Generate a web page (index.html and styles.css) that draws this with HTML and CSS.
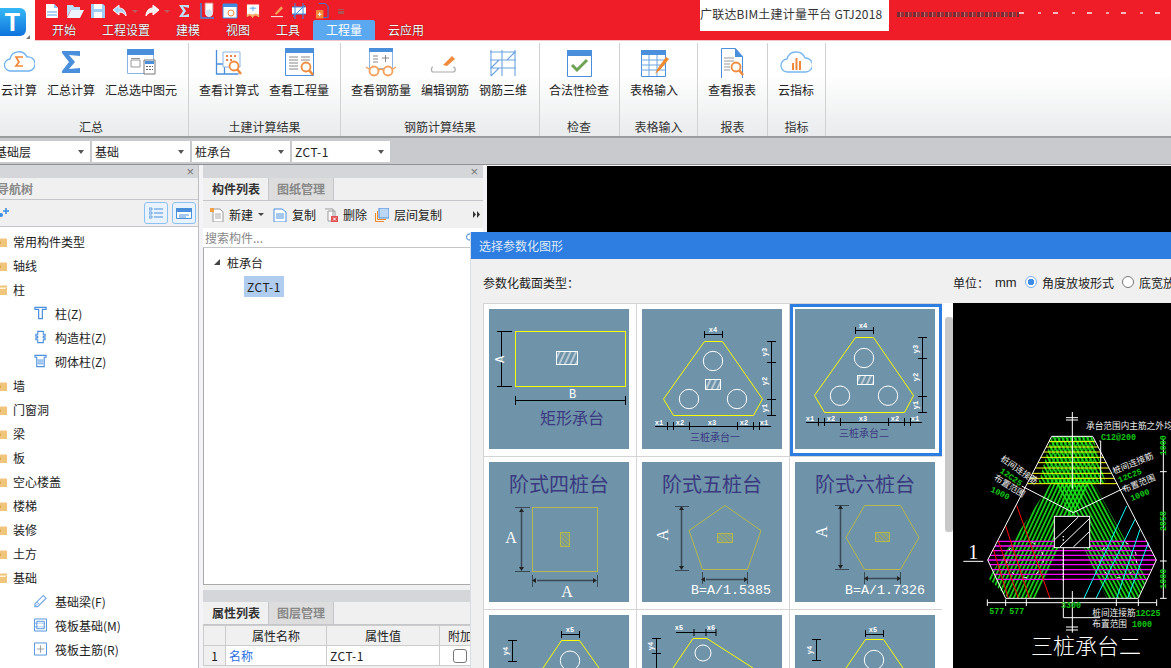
FILE: index.html
```html
<!DOCTYPE html>
<html lang="zh-CN">
<head>
  <meta charset="UTF-8">
  <title>广联达BIM土建计量平台 GTJ2018</title>
  <link rel="stylesheet" href="styles.css">
</head>
<body>
  <!-- shared icon shapes and hatch fills -->
  <svg class="defs" width="0" height="0">
    <defs>
      <symbol id="folder" viewBox="0 0 14 12">
        <path d="M0 2h5l1 1.500h8V12H0z" fill="#efc67c"/>
        <path d="M5 6.500h3v2.500H5z" fill="#dda550"/>
      </symbol>
      <symbol id="folder-open" viewBox="0 0 14 12">
        <path d="M0 1h5l1 1.500h8V12H0z" fill="#efc67c"/>
        <path d="M2 4.500h12L12 6H4z" fill="#fff3d8"/>
      </symbol>
      <pattern id="hatch-w" width="5" height="5" patternUnits="userSpaceOnUse" patternTransform="rotate(25)">
        <path d="M2 0v5" stroke="#fff" stroke-width="1"/>
      </pattern>
      <pattern id="hatch-y" width="3" height="3" patternUnits="userSpaceOnUse" patternTransform="rotate(-45)">
        <path d="M1 0v3" stroke="#b5b84c" stroke-width="1"/>
      </pattern>
      <pattern id="green-l" width="11" height="11" patternUnits="userSpaceOnUse" patternTransform="rotate(25)">
        <path d="M5 0v11" stroke="#19e619" stroke-width="5"/>
      </pattern>
      <pattern id="green-r" width="11" height="11" patternUnits="userSpaceOnUse" patternTransform="rotate(-28)">
        <path d="M5 0v11" stroke="#19e619" stroke-width="5"/>
      </pattern>
    </defs>
  </svg>

  <header class="titlebar">
    <div class="logo-box">
      <div class="logo">T</div>
      <span class="logo-mark"></span>
    </div>
    <div class="title-left">
      <div class="quick">
        <svg class="q" width="16" height="16" viewBox="0 0 16 16"><path d="M2 1h8l4 4v10H2z" fill="#fff"/><path d="M10 1v4h4" fill="#8fc2f2"/><path d="M3 9h10M3 12h10" stroke="#5aa0e6"/></svg>
        <svg class="q" width="18" height="16" viewBox="0 0 18 16"><path d="M1 2h6l1 2h6v3H5L1 14z" fill="#bcdcf8"/><path d="M5 7h13l-4 8H1z" fill="#eef6fd"/></svg>
        <svg class="q" width="16" height="16" viewBox="0 0 16 16"><path d="M1 1h12l2 2v12H1z" fill="#9fcdf6"/><path d="M4 1h8v5H4z" fill="#fff"/><path d="M4 9h8v6H4z" fill="#fff"/></svg>
        <svg class="q" width="16" height="14" viewBox="0 0 16 14"><path d="M7 1L1 6l6 5V8c3 0 5 1 7 4 0-5-3-8-7-8z" fill="#a9d4f8" stroke="#fff"/></svg>
        <span class="q-arrow"></span>
        <svg class="q" width="16" height="14" viewBox="0 0 16 14"><path d="M9 1l6 5-6 5V8C6 8 4 9 2 12c0-5 3-8 7-8z" fill="#f2f2f2" stroke="#fff"/></svg>
        <span class="q-arrow"></span>
        <svg class="q q-sigma" width="12" height="14" viewBox="0 0 12 14"><path d="M1 1h10v3L5 2.500 8 7l-3 4.500 6-1.500v3H1l4-6z" fill="#bfe0fb"/></svg>
        <svg class="q q-wide" width="16" height="18" viewBox="0 0 16 18"><path d="M1 1v15h13" fill="none" stroke="#3d8ce0" stroke-width="1.500"/><path d="M5 1h8v9H5z" fill="#fff" stroke="#d77"/><circle cx="9" cy="11" r="3.500" fill="#cfe5fa" stroke="#eee"/></svg>
        <svg class="q" width="16" height="16" viewBox="0 0 16 16"><path d="M1 1h14v14H1z" fill="#fff" stroke="#3d8ce0"/><path d="M1 1h14v3H1z" fill="#3d8ce0"/><circle cx="9" cy="10" r="3" fill="none" stroke="#f08a3c"/></svg>
        <svg class="q q-m2" width="14" height="16" viewBox="0 0 15 16"><path d="M1 1h13v11H1z" fill="#fff"/><path d="M4 5h7M7.500 3v5" stroke="#5aa0e6"/><path d="M1 14c2-3 4-3 6 0 2-3 4-3 7 0" fill="none" stroke="#f6b26b" stroke-width="2"/></svg>
        <svg class="q q-wide" width="14" height="15" viewBox="0 0 15 15"><path d="M5 10l7-8 2 2-7 7z" fill="#f5a05a"/><path d="M1 13h13" stroke="#fff"/></svg>
        <svg class="q q-m1" width="16" height="16" viewBox="0 0 16 16"><path d="M1 4h14v7H1z" fill="#fff"/><path d="M1 4h14M1 11h14M4 0v16M12 0v16M2 14L14 2" stroke="#3d8ce0" fill="none"/></svg>
        <svg class="q q-m2" width="14" height="18" viewBox="0 0 15 18"><path d="M4 1h7l3 3v12H6" fill="none" stroke="#2c7fd6"/><path d="M1 8h8v9H1z" fill="#f08a3c"/><path d="M3 12.500h4M5 10.500v4" stroke="#fff"/></svg>
        <span class="q-more"></span>
      </div>
      <nav class="tabs">
        <span class="tab">开始</span>
        <span class="tab">工程设置</span>
        <span class="tab">建模</span>
        <span class="tab">视图</span>
        <span class="tab">工具</span>
        <span class="tab tab-active">工程量</span>
        <span class="tab">云应用</span>
      </nav>
    </div>
    <div class="app-title">广联达BIM土建计量平台 GTJ2018</div>
    <div class="garble"></div>
  </header>

  <section class="ribbon">
    <div class="group g1">
      <div class="btns">
        <div class="rbtn">
          <svg width="32" height="32" viewBox="0 0 32 32"><path d="M8 25a6 6 0 0 1-1-12 9 9 0 0 1 17-2 7 7 0 0 1 2 14z" fill="#fff" stroke="#6db1ee" stroke-width="1.300"/><path d="M20 11h-7l3 5-3 4h7" fill="none" stroke="#f0883a" stroke-width="1.700"/></svg>
          <span>云计算</span>
        </div>
        <div class="rbtn">
          <svg width="32" height="32" viewBox="0 0 32 32"><path d="M7 5h18v5l-11-1 6 7-6 7 11-1v5H7v-2l7-9-7-9z" fill="#4a8fdc"/></svg>
          <span>汇总计算</span>
        </div>
        <div class="rbtn">
          <svg width="32" height="32" viewBox="0 0 32 32"><path d="M2.500 3.500h26v24h-26z" fill="#fff" stroke="#8bb5e4"/><path d="M2 3h27v6H2z" fill="#4a8fdc"/><path d="M6 14h9v7H6zM6 12.500h9" fill="none" stroke="#999"/><path d="M19 14h11v14H19z" fill="#fff" stroke="#777"/><path d="M20 15h9v3h-9z" fill="#4a8fdc"/><path d="M21 20h2v1h-2zM24 20h2v1h-2zM27 20h1v1h-1zM21 23h2v1h-2zM24 23h2v1h-2zM27 23h1v1h-1z" fill="#666"/></svg>
          <span>汇总选中图元</span>
        </div>
      </div>
      <div class="gname gname-1">汇总</div>
    </div>

    <div class="group g2">
      <div class="btns">
        <div class="rbtn">
          <svg width="32" height="32" viewBox="0 0 32 32"><path d="M3.500 4v24h22" fill="none" stroke="#4a8fdc" stroke-width="1.300"/><path d="M3.500 18h8v10" fill="none" stroke="#4a8fdc" stroke-width="1.300"/><path d="M10 6h17v15H10z" fill="#fff" stroke="#8bb5e4"/><path d="M13 9h2v2h-2zM17 9h2v2h-2zM21 9h2v2h-2zM13 13h2v2h-2zM17 13h2v2h-2z" fill="#e6824a"/><circle cx="21" cy="20" r="4.500" fill="#fff" stroke="#f08a3c" stroke-width="1.800"/><path d="M24 23l4 5" stroke="#f08a3c" stroke-width="2.500"/></svg>
          <span>查看计算式</span>
        </div>
        <div class="rbtn">
          <svg width="32" height="32" viewBox="0 0 32 32"><path d="M2.500 3.500h28v26h-28z" fill="#fff" stroke="#4a8fdc"/><path d="M2 2h29v5H2z" fill="#4a8fdc"/><path d="M6 11h9M6 14h9M6 17h9M6 20h9M6 23h9M18 11h9M18 14h9" stroke="#888"/><circle cx="23" cy="21" r="4.500" fill="#fff" stroke="#f08a3c" stroke-width="1.800"/><path d="M26 24l4 5" stroke="#f08a3c" stroke-width="2.500"/></svg>
          <span>查看工程量</span>
        </div>
      </div>
      <div class="gname">土建计算结果</div>
    </div>

    <div class="group g3">
      <div class="btns">
        <div class="rbtn">
          <svg width="32" height="32" viewBox="0 0 32 32"><path d="M4.500 4.500h23v18h-23z" fill="#fff" stroke="#8bb5e4"/><path d="M4 2h24v4H4z" fill="#4a8fdc"/><path d="M8 10h5M8 13h5M8 16h5M17 12h7M20.500 9v7" stroke="#888"/><circle cx="9" cy="25" r="4.500" fill="#fff" stroke="#f5a05a" stroke-width="1.800"/><circle cx="23" cy="25" r="4.500" fill="#fff" stroke="#f5a05a" stroke-width="1.800"/><path d="M13 24c2-1 4-1 6 0M4 23L1 21M28 23l3-2" fill="none" stroke="#f5a05a" stroke-width="1.500"/></svg>
          <span>查看钢筋量</span>
        </div>
        <div class="rbtn">
          <svg width="32" height="32" viewBox="0 0 32 32"><path d="M14 19l9-9 3 3-8 7z" fill="#f08a3c"/><path d="M4 21c-2 0-2 5 0 5h20c3 0 3-5 0-5" fill="none" stroke="#aaa" stroke-width="1.200"/></svg>
          <span>编辑钢筋</span>
        </div>
        <div class="rbtn">
          <svg width="32" height="32" viewBox="0 0 32 32"><path d="M4 4v26M28 4v26M15 4v26M3 6h26M3 14h26M3 22h26M4 22l8-8M4 30l8-8M20 14l8-8" fill="none" stroke="#6ba4e2" stroke-width="1.100"/></svg>
          <span>钢筋三维</span>
        </div>
      </div>
      <div class="gname">钢筋计算结果</div>
    </div>

    <div class="group g4">
      <div class="btns">
        <div class="rbtn">
          <svg width="32" height="32" viewBox="0 0 32 32"><path d="M4.500 5.500h24v25h-24z" fill="#fff" stroke="#4a8fdc"/><path d="M4 4h25v6H4z" fill="#4a8fdc"/><path d="M9 19l5 5 10-10" fill="none" stroke="#6da354" stroke-width="3"/></svg>
          <span>合法性检查</span>
        </div>
      </div>
      <div class="gname">检查</div>
    </div>

    <div class="group g5">
      <div class="btns">
        <div class="rbtn">
          <svg width="32" height="32" viewBox="0 0 32 32"><path d="M3.500 5.500h24v25h-24z" fill="#fff" stroke="#4a8fdc"/><path d="M3 4h25v5H3z" fill="#4a8fdc"/><path d="M3 14h25M3 19h25M3 24h25M11 9v21M19 9v21" stroke="#6ba4e2"/><path d="M17 28l3-6 8-11 3 2-9 11z" fill="#f08a2c"/></svg>
          <span>表格输入</span>
        </div>
      </div>
      <div class="gname">表格输入</div>
    </div>

    <div class="group g6">
      <div class="btns">
        <div class="rbtn">
          <svg width="32" height="32" viewBox="0 0 32 32"><path d="M5.500 2.500h14l7 8v22h-21z" fill="#fff" stroke="#4a8fdc"/><path d="M19 2l8 9h-8z" fill="#4a8fdc"/><path d="M8 12h10M8 15h10M8 18h6M8 21h6M8 24h6" stroke="#999"/><circle cx="20" cy="21" r="4.500" fill="#fff" stroke="#f08a3c" stroke-width="1.800"/><path d="M23 24l4 5" stroke="#f08a3c" stroke-width="2.500"/></svg>
          <span>查看报表</span>
        </div>
      </div>
      <div class="gname">报表</div>
    </div>

    <div class="group g7">
      <div class="btns">
        <div class="rbtn">
          <svg width="32" height="32" viewBox="0 0 32 32"><path d="M8 26a6.500 6.500 0 0 1-1-13 9.500 9.500 0 0 1 18-1 7 7 0 0 1 1 14z" fill="#fff" stroke="#78b7ee" stroke-width="1.300"/><path d="M12 17h2v7h-2zM15.500 12h2v12h-2zM19 15h2v9h-2z" fill="#f0883a"/></svg>
          <span>云指标</span>
        </div>
      </div>
      <div class="gname">指标</div>
    </div>
  </section>

  <section class="combos">
    <div class="combo combo-first"><span class="clip-text">基础层</span></div>
    <div class="combo">基础</div>
    <div class="combo">桩承台</div>
    <div class="combo latin">ZCT-1</div>
  </section>

  <main class="workspace">
    <aside class="nav-panel">
      <div class="strip"><span class="x">×</span></div>
      <div class="nav-title"><span>导航树</span></div>
      <div class="nav-tools">
        <svg class="spark" width="9" height="10" viewBox="0 0 9 10"><path d="M6 0v6M3 3h6" stroke="#3d8ce0" stroke-width="1.600"/><circle cx="1" cy="7" r="2" fill="#3d8ce0"/></svg>
        <div class="tool-btn">
          <svg width="14" height="14" viewBox="0 0 14 14"><path d="M0 2h3v2H0zM0 6h3v2H0zM0 10h3v2H0z" fill="none" stroke="#4a8fdc" stroke-width=".8"/><path d="M5 3h9M5 7h9M5 11h9" stroke="#4a8fdc"/></svg>
        </div>
        <div class="tool-btn">
          <svg width="16" height="14" viewBox="0 0 16 14"><path d="M.5 2.500h15v10H.5z" fill="#fff" stroke="#4a8fdc"/><path d="M0 2h16v4H0z" fill="#4a8fdc"/><path d="M3 9h10M3 11h7" stroke="#4a8fdc"/></svg>
        </div>
      </div>
      <ul class="tree">
        <li class="node"><svg class="folder"><use href="#folder"/></svg>常用构件类型</li>
        <li class="node"><svg class="folder"><use href="#folder"/></svg>轴线</li>
        <li class="node"><svg class="folder"><use href="#folder-open"/></svg>柱</li>
        <li class="leaf"><svg class="leaf-ico" viewBox="0 0 14 14"><path d="M1 1h12v2H9v10H5V3H1z" fill="#fff" stroke="#4a8fdc" stroke-width="1.300"/></svg>柱(Z)</li>
        <li class="leaf"><svg class="leaf-ico" viewBox="0 0 14 14"><path d="M4 1h6v3h2v2h-2v2h2v2h-2v3H4v-3H2V8h2V6H2V4h2z" fill="#fff" stroke="#4a8fdc" stroke-width="1.200"/></svg>构造柱(Z)</li>
        <li class="leaf"><svg class="leaf-ico" viewBox="0 0 14 14"><path d="M1 1h12v2h-2v10H3V3H1z" fill="#fff" stroke="#4a8fdc" stroke-width="1.200"/><path d="M4 6h6M4 8h6M4 10h6" stroke="#4a8fdc"/></svg>砌体柱(Z)</li>
        <li class="node"><svg class="folder"><use href="#folder"/></svg>墙</li>
        <li class="node"><svg class="folder"><use href="#folder"/></svg>门窗洞</li>
        <li class="node"><svg class="folder"><use href="#folder"/></svg>梁</li>
        <li class="node"><svg class="folder"><use href="#folder"/></svg>板</li>
        <li class="node"><svg class="folder"><use href="#folder"/></svg>空心楼盖</li>
        <li class="node"><svg class="folder"><use href="#folder"/></svg>楼梯</li>
        <li class="node"><svg class="folder"><use href="#folder"/></svg>装修</li>
        <li class="node"><svg class="folder"><use href="#folder"/></svg>土方</li>
        <li class="node"><svg class="folder"><use href="#folder-open"/></svg>基础</li>
        <li class="leaf"><svg class="leaf-ico" viewBox="0 0 14 14"><path d="M1 10l9-9 3 3-9 9H1z" fill="#fff" stroke="#6ba4e2" stroke-width="1.200"/><path d="M3 8l3 3M1 13l3-3" stroke="#6ba4e2"/></svg>基础梁(F)</li>
        <li class="leaf"><svg class="leaf-ico" viewBox="0 0 14 14"><path d="M.5.500h13v13H.5z" fill="#fff" stroke="#4a8fdc"/><path d="M3 3h8v8H3z" fill="none" stroke="#4a8fdc"/><path d="M1 5h12M1 9h12" stroke="#4a8fdc" stroke-dasharray="1 1"/></svg>筏板基础(M)</li>
        <li class="leaf"><svg class="leaf-ico" viewBox="0 0 14 14"><path d="M.5.500h13v13H.5z" fill="#fff" stroke="#4a8fdc"/><path d="M3 7h8M7 3v8" stroke="#999"/></svg>筏板主筋(R)</li>
      </ul>
    </aside>

    <section class="mid-panel">
      <div class="strip"><span class="x x-mid">×</span></div>
      <div class="ptabs">
        <span class="ptab ptab-on">构件列表</span>
        <span class="ptab">图纸管理</span>
      </div>
      <div class="mid-tools">
        <svg class="tool-ico" viewBox="0 0 14 14"><path d="M3 1h7l3 3v10H3z" fill="#fff" stroke="#999"/><path d="M5 6h6M5 8h6M5 10h6" stroke="#aaa"/><path d="M0 0h4v4H0z" fill="#f0a040"/></svg>
        <span>新建</span>
        <span class="caret"></span>
        <svg class="tool-ico" viewBox="0 0 14 14"><path d="M1 1h8l4 3v10H1z" fill="#fff" stroke="#4a8fdc"/><path d="M3 6h8M3 8h8M3 10h8" stroke="#4a8fdc"/></svg>
        <span>复制</span>
        <svg class="tool-ico ti-gap" viewBox="0 0 14 14"><path d="M1 1h8v8M4 3h7v6M4 3v10h4" fill="#fff" stroke="#999"/><path d="M7 8h7v6H7z" fill="#e05050"/><path d="M9 9.500l3 3M12 9.500l-3 3" stroke="#fff"/></svg>
        <span>删除</span>
        <svg class="tool-ico ti-gap" viewBox="0 0 14 14"><path d="M4 0h10v10H4z" fill="#bcd6f5" stroke="#4a8fdc"/><path d="M2.500 3v8.500H11M.5 5v8.500H9" fill="none" stroke="#f08a2c"/></svg>
        <span>层间复制</span>
        <span class="more">
          <svg width="7" height="7" viewBox="0 0 7 7"><path d="M0 0l3 3.500L0 7zM4 0l3 3.500L4 7z" fill="#333"/></svg>
        </span>
      </div>
      <div class="search">
        <span class="search-text">搜索构件...</span>
        <svg width="9" height="9" viewBox="0 0 9 9"><circle cx="4.500" cy="4" r="3" fill="none" stroke="#6ba4e2" stroke-width="1.300"/></svg>
      </div>
      <div class="comp-tree">
        <div class="comp-row"><span class="tri"></span>桩承台</div>
        <div class="comp-row comp-child"><span class="sel latin">ZCT-1</span></div>
      </div>
      <div class="strip strip-lower"></div>
      <div class="ptabs ptabs-lower">
        <span class="ptab ptab-on">属性列表</span>
        <span class="ptab">图层管理</span>
      </div>
      <table class="props">
        <tr>
          <th class="c-no"></th>
          <th class="c-name">属性名称</th>
          <th class="c-val">属性值</th>
          <th class="c-add">附加</th>
        </tr>
        <tr>
          <th class="c-no">1</th>
          <td class="link">名称</td>
          <td class="latin">ZCT-1</td>
          <td class="c-check"><span class="check"></span></td>
        </tr>
      </table>
    </section>

    <div class="canvas"></div>

    <!-- dialog floats over the drawing area -->
    <div class="dialog">
      <div class="dlg-head">选择参数化图形</div>
      <div class="dlg-row">
        <span class="dlg-label">参数化截面类型：</span>
        <span class="unit">单位：</span>
        <span class="unit-mm">mm</span>
        <span class="radio radio-on"></span>
        <span class="radio-text">角度放坡形式</span>
        <span class="radio"></span>
        <span class="radio-text">底宽放坡形式</span>
      </div>
      <div class="dlg-body">
        <div class="shape-grid">
          <div class="cell">
            <svg class="shape" viewBox="0 0 140 140">
              <rect x="26.500" y="22.500" width="110" height="55" class="yl"/>
              <path d="M12.500 22v55M8 22.500h15M8 77.500h15M26.500 87v9M136.500 87v9M26.500 91.500h110" class="dim"/>
              <rect x="67.500" y="42.500" width="21" height="13" class="hw"/>
              <text x="7" y="54" class="t-m" transform="rotate(-90 11 50)">A</text>
              <text x="80" y="89" class="t-m">B</text>
              <text x="83" y="115" class="t-name t-16">矩形承台</text>
            </svg>
          </div>
          <div class="cell">
            <svg class="shape" viewBox="0 0 140 140">
              <path d="M62.500 32.500h18L120.500 90l-9 16.500h-80L21.500 90z" class="yl"/>
              <circle cx="71" cy="52" r="9.700" class="wc"/><circle cx="47" cy="90" r="9.700" class="wc"/><circle cx="95" cy="90" r="9.700" class="wc"/>
              <rect x="63.500" y="70.500" width="15" height="10" class="hw"/>
              <path d="M62.500 22v7M80.500 22v7M62.500 25.500h18M129.500 32v74M125 32.500h9M125 53.500h9M125 90.500h9M125 106.500h9M13 117.500h116M25.500 113v8M31.500 113v8M47.500 113v8M95.500 113v8M111.500 113v8M117.500 113v8" class="dim"/>
              <text x="71" y="23" class="t-s">x4</text><text x="17" y="116" class="t-s">x1</text><text x="38" y="116" class="t-s">x2</text><text x="70" y="116" class="t-s">x3</text><text x="102" y="116" class="t-s">x2</text><text x="122" y="116" class="t-s">x1</text>
              <text x="123" y="45" class="t-s" transform="rotate(-90 123 43)">y3</text><text x="123" y="74" class="t-s" transform="rotate(-90 123 72)">y2</text><text x="123" y="101" class="t-s" transform="rotate(-90 123 99)">y1</text>
              <text x="73" y="132" class="t-name t-12">三桩承台一</text>
            </svg>
          </div>
          <div class="cell cell-on">
            <svg class="shape" viewBox="0 0 140 140">
              <path d="M60.500 28.500h18l40 58-9 17h-80l-10-17z" class="yl"/>
              <circle cx="69" cy="49" r="9.700" class="wc"/><circle cx="45" cy="86.700" r="9.700" class="wc"/><circle cx="93" cy="86.700" r="9.700" class="wc"/>
              <rect x="62.500" y="66.500" width="16" height="9" class="hw"/>
              <path d="M60.500 18v7M78.500 18v7M60.500 21.500h18M127.500 28v76M123 28.500h9M123 49.500h9M123 87.500h9M123 103.500h9M11 113.500h116M23.500 109v8M29.500 109v8M45.500 109v8M93.500 109v8M109.500 109v8M115.500 109v8" class="dim"/>
              <text x="68" y="19" class="t-s">x4</text><text x="15" y="112" class="t-s">x1</text><text x="36" y="112" class="t-s">x2</text><text x="68" y="112" class="t-s">x3</text><text x="100" y="112" class="t-s">x2</text><text x="120" y="112" class="t-s">x1</text>
              <text x="121" y="42" class="t-s" transform="rotate(-90 121 40)">y3</text><text x="121" y="70" class="t-s" transform="rotate(-90 121 68)">y2</text><text x="121" y="98" class="t-s" transform="rotate(-90 121 96)">y1</text>
              <text x="69" y="128" class="t-name t-12">三桩承台二</text>
            </svg>
          </div>

          <div class="cell">
            <svg class="shape" viewBox="0 0 140 140">
              <text x="70" y="30" class="t-name t-20">阶式四桩台</text>
              <rect x="43.500" y="45.500" width="65" height="64" class="ol"/>
              <rect x="71.500" y="70.500" width="9" height="14" class="hy"/>
              <path d="M26 45.500h15M26 109.500h15M43.500 113v12M108.500 113v12" class="dim2"/>
              <path d="M32.500 50v55M48 118.500h56" class="dim3"/>
              <path d="M30 50h5l-2.500-4zM30 105h5l-2.500 4zM47 116v5l-4-2.500zM104 116v5l4-2.500z" fill="#222"/>
              <text x="22" y="81" class="t-w">A</text>
              <text x="78" y="135" class="t-w">A</text>
            </svg>
          </div>
          <div class="cell">
            <svg class="shape" viewBox="0 0 140 140">
              <text x="70" y="30" class="t-name t-20">阶式五桩台</text>
              <path d="M83 43.500L119 68.500 105.500 107.500H60.500L47 68.500z" class="ol"/>
              <rect x="75.500" y="71.500" width="15" height="9" class="hy"/>
              <path d="M33 44.500h14M33 108.500h14M60.500 110v12M105.500 110v12" class="dim2"/>
              <path d="M39.500 48v56M64 117.500h38" class="dim3"/>
              <path d="M37 48h5l-2.500-4zM37 104h5l-2.500 4zM63 115v5l-4-2.500zM102 115v5l4-2.500z" fill="#222"/>
              <text x="25" y="74" class="t-w" transform="rotate(-90 25 73)">A</text>
              <text x="89" y="132" class="t-f">B=A/1.5385</text>
            </svg>
          </div>
          <div class="cell">
            <svg class="shape" viewBox="0 0 140 140">
              <text x="70" y="30" class="t-name t-20">阶式六桩台</text>
              <path d="M69.500 43.500h36l18.500 32-18.500 32h-36L51 75.500z" class="ol"/>
              <rect x="80.500" y="70.500" width="14" height="9" class="hy"/>
              <path d="M40 43.500h14M40 107.500h14M69.500 110v12M105.500 110v12" class="dim2"/>
              <path d="M45.500 47v56M73 116.500h29" class="dim3"/>
              <path d="M43 47h5l-2.500-4zM43 103h5l-2.500 4zM73 114v5l-4-2.500zM102 114v5l4-2.500z" fill="#222"/>
              <text x="31" y="71" class="t-w" transform="rotate(-90 31 70)">A</text>
              <text x="90" y="132" class="t-f">B=A/1.7326</text>
            </svg>
          </div>

          <div class="cell">
            <svg class="shape" viewBox="0 0 140 140">
              <path d="M54 53L72.500 25.500h18L110 53" class="yl"/>
              <circle cx="81" cy="45.700" r="9.700" class="wc"/>
              <path d="M72.500 16v7M90.500 16v7M72.500 19.500h18M23.500 25v22M19 25.500h9M19 46.500h9" class="dim"/>
              <text x="81" y="17" class="t-s">x5</text>
              <text x="17" y="38" class="t-s" transform="rotate(-90 17 36)">y4</text>
            </svg>
          </div>
          <div class="cell">
            <svg class="shape" viewBox="0 0 140 140">
              <path d="M31 53L51 23.500h14L111 53" class="yl"/>
              <circle cx="61" cy="38" r="8" class="wc"/>
              <path d="M34 17.500h40M52 14v7M64 14v7M74 14v7M14.500 23v30M10 23.500h9M10 38.500h9" class="dim"/>
              <text x="37" y="15" class="t-s">x5</text><text x="69" y="15" class="t-s">x6</text>
              <text x="9" y="33" class="t-s" transform="rotate(-90 9 31)">y4</text>
            </svg>
          </div>
          <div class="cell">
            <svg class="shape" viewBox="0 0 140 140">
              <path d="M51 53L70.500 24.500h18L108 53" class="yl"/>
              <circle cx="79" cy="45" r="9.700" class="wc"/>
              <path d="M70.500 15v7M88.500 15v7M70.500 19.500h18M21.500 24v22M17 24.500h9M17 45.500h9" class="dim"/>
              <text x="78" y="17" class="t-s">x5</text>
              <text x="15" y="37" class="t-s" transform="rotate(-90 15 35)">y4</text>
            </svg>
          </div>
        </div>

        <div class="gutter"><div class="thumb"></div></div>

        <div class="preview">
          <svg class="drawing" viewBox="39 111 654 1098">
            <path d="M340 640h115l-170 357h-80l-60-60z" fill="url(#green-l)"/>
            <path d="M340 640h115l165 300-25 57H500z" fill="url(#green-r)"/>
            <path d="M335 511h123l40 142H295z" fill="url(#green-r)"/>
            <path d="M337 511h118l20 142H315z" fill="url(#green-l)" opacity=".7"/>
            <circle cx="255" cy="880" r="55" fill="none" stroke="#fff" stroke-width="3" stroke-dasharray="10 30"/>
            <circle cx="535" cy="880" r="55" fill="none" stroke="#fff" stroke-width="3" stroke-dasharray="10 30"/>
            <path d="M327 527h139M318 543h157M311 558h171M302 574h189M294 590h205M286 606h221M278 622h237M270 637h253M262 653h270" stroke="#ff0" stroke-width="3"/>
            <path d="M172 826h449M165 840h463M157 854h478M150 868h492M143 882h506M150 896h492M157 911h478M163 925h466M170 940h452" stroke="#f0f" stroke-width="4"/>
            <path d="M230 718l100 279M197 780l71 217M175 825l60 172M160 850l45 147" stroke="#f00" stroke-width="3"/>
            <path d="M560 720L432 997M585 760L468 997M600 790L530 997M625 830L563 997" stroke="#0ff" stroke-width="3"/>
            <path d="M335 511h123L649 882l-54 115H197L143 882z" fill="none" stroke="#fff" stroke-width="3"/>
            <path d="M245 660l155 80 155-75M397 438v230M397 975v125M378 455h36M378 462h36M378 1083h36M378 1092h36M370 810v245h110M482 525v130M482 525h-4" fill="none" stroke="#fff" stroke-width="3"/>
            <rect x="343" y="751" width="106" height="94" fill="#000" stroke="#fff" stroke-width="3"/>
            <path d="M345 820l70-67M360 843l88-85M400 843l48-46" stroke="#fff" stroke-width="3"/>
            <path d="M370 810v30M370 860v90" stroke="#fff" stroke-width="4" stroke-dasharray="4 6"/>
            <path d="M70 886h60" stroke="#fff" stroke-width="3"/>
            <path d="M670 520v477M660 617h20M660 885h20M660 997h20M142 1010h508M142 1000v20M197 1000v20M259 1000v20M529 1000v20M595 1000v20M650 1000v20" fill="none" stroke="#fff" stroke-width="3"/>
            <text x="100" y="880" class="p-one">1</text>
            <text x="438" y="490" class="p-w">承台范围内主筋之外均</text>
            <text x="483" y="521" class="p-g">C12@200</text>
            <text x="148" y="1044" class="p-g">577</text>
            <text x="208" y="1044" class="p-g">577</text>
            <text x="363" y="1026" class="p-g">3300</text>
            <text x="457" y="1050" class="p-w">桩间连接筋<tspan class="p-gs">12C25</tspan></text>
            <text x="457" y="1082" class="p-w">布置范围<tspan class="p-gs"> 1000</tspan></text>
            <text transform="translate(180 582) rotate(35)" class="p-w">桩间连接筋</text>
            <text transform="translate(178 618) rotate(35)" class="p-g">12C25</text>
            <text transform="translate(160 640) rotate(32)" class="p-w">布置范围</text>
            <text transform="translate(150 676) rotate(25)" class="p-g">1000</text>
            <text transform="translate(522 625) rotate(-22)" class="p-w">桩间连接筋</text>
            <text transform="translate(538 650) rotate(-22)" class="p-g">12C25</text>
            <text transform="translate(552 680) rotate(-22)" class="p-w">布置范围</text>
            <text transform="translate(575 705) rotate(-22)" class="p-g">1000</text>
            <text transform="translate(678 568) rotate(-90)" class="p-g">1000</text>
            <text transform="translate(678 795) rotate(-90)" class="p-g">2858</text>
            <text transform="translate(678 968) rotate(-90)" class="p-g">1000</text>
            <text x="273" y="1164" class="p-title">三桩承台二</text>
          </svg>
        </div>
      </div>
    </div>
  </main>
</body>
</html>
```

FILE: styles.css
```css
* {
  box-sizing: border-box;
}
html, body {
  margin: 0;
  width: 1171px;
  height: 668px;
  overflow: hidden;
}
body {
  font-family: "Noto Sans CJK SC", "Noto Sans", sans-serif;
  font-size: 12px;
  color: #222;
  background: #f0f0f0;
}
.defs {
  display: block;
  height: 0;
}
svg {
  display: block;
  flex-shrink: 0;
}
.latin {
  letter-spacing: .5px;
}

/* title bar */
.titlebar {
  display: flex;
  height: 41px;
  background: #ee1d27;
  border-bottom: 1px solid #f2c6c8;
}
.logo-box {
  position: relative;
  width: 35px;
  height: 41px;
  background: #fff;
  padding-top: 8px;
}
.logo {
  width: 27px;
  height: 28px;
  margin-left: -1px;
  border-radius: 0 6px 6px 0;
  background: linear-gradient(#36b8f5, #0f74dc);
  color: #fff;
  font: bold 25px/28px "Liberation Sans", sans-serif;
  text-align: center;
}
.logo-mark {
  position: absolute;
  right: 5px;
  bottom: 2px;
  border-left: 4px solid transparent;
  border-bottom: 4px solid #777;
}
.title-left {
  width: 665px;
}
.quick {
  display: flex;
  align-items: center;
  height: 20px;
  padding: 2px 0 0 9px;
  gap: 6px;
}
.q-wide {
  margin-left: 4px;
}
.q-m1 {
  margin-left: 1px;
}
.q-m2 {
  margin-left: 2px;
}
.q-sigma {
  margin-left: 2px;
}
.q-arrow {
  margin-left: -2px;
  border-top: 3px solid #c05a60;
  border-left: 3px solid transparent;
  border-right: 3px solid transparent;
}
.q-more {
  width: 6px;
  height: 5px;
  margin-left: 3px;
  border-top: 1px solid #a55;
  border-bottom: 3px solid #a55;
}
.tabs {
  display: flex;
  height: 20px;
  padding-left: 4px;
}
.tab {
  line-height: 20px;
  padding: 0 13px;
  color: #fff;
  text-shadow: 0 0 1px #111;
}
.tab-active {
  width: 62px;
  padding: 0;
  text-align: center;
  background: #5aa9f0;
  border-radius: 2px 2px 0 0;
  text-shadow: none;
}
.app-title {
  width: 189px;
  height: 31px;
  background: #fff;
  color: #333;
  letter-spacing: .2px;
  line-height: 28px;
  white-space: nowrap;
}
.garble {
  width: 274px;
  height: 5px;
  margin: 12px 0 0 8px;
  background:
    repeating-linear-gradient(90deg, #7a2a30 0 3px, #c96a70 3px 4px, #8c3338 4px 7px, #ee1d27 7px 8px) 0 0 / 122px 100% no-repeat,
    repeating-linear-gradient(90deg, #f7b9bb 0 5px, #ee1d27 5px 19px, #f29ea2 19px 22px, #ee1d27 22px 34px) 122px 0 / 152px 2px no-repeat;
}

/* ribbon */
.ribbon {
  display: flex;
  height: 97px;
  background: linear-gradient(#fff 35%, #e9ebec);
  border-bottom: 2px solid #9a9c9e;
}
.group {
  display: flex;
  flex-direction: column;
  height: 93px;
  margin-top: 2px;
  border-right: 1px solid #cfd1d3;
  padding-left: 10px;
}
.g1 { width: 189px; padding-left: 1px; }
.g2 { width: 152px; }
.g3 { width: 199px; }
.g4 { width: 80px; padding-left: 9px; }
.g5 { width: 78px; }
.g6 { width: 70px; }
.g7 { width: 58px; }
.btns {
  display: flex;
  gap: 10px;
  height: 75px;
  padding-top: 3px;
}
.rbtn {
  display: flex;
  flex-direction: column;
  align-items: center;
  gap: 3px;
  color: #222;
  line-height: 18px;
  white-space: nowrap;
}
.gname {
  text-align: center;
  line-height: 18px;
  color: #333;
  padding-right: 10px;
}
.gname-1 {
  padding-right: 7px;
}

/* combo row */
.combos {
  display: flex;
  gap: 2px;
  height: 27px;
  padding-top: 3px;
  background: #c8cace;
  border-bottom: 1px solid #8f9194;
}
.combo {
  position: relative;
  width: 98px;
  height: 21px;
  padding-left: 3px;
  background: #fff;
  line-height: 21px;
}
.combo::after {
  content: "";
  position: absolute;
  right: 6px;
  top: 9px;
  border-top: 4px solid #555;
  border-left: 3px solid transparent;
  border-right: 3px solid transparent;
}
.combo-first {
  width: 90px;
  padding-left: 0;
  overflow: hidden;
}
.clip-text {
  display: block;
  margin-left: -5px;
}

/* main area */
.workspace {
  position: relative;
  display: flex;
  gap: 4px;
  height: 503px;
  background: #f4f4f6;
}
.strip {
  position: relative;
  height: 13px;
  background: #d5d6da;
}
.x {
  position: absolute;
  right: 4px;
  top: 0;
  font: 13px/13px "Liberation Sans", sans-serif;
  color: #777;
}
.x-mid {
  right: 5px;
}

/* navigation tree */
.nav-panel {
  width: 199px;
  border-right: 1px solid #bcbec2;
  background: #fff;
  overflow: hidden;
}
.nav-title {
  height: 22px;
  line-height: 22px;
  background: #f0f0f0;
  border-bottom: 1px solid #c4c6ca;
  color: #888;
  font-weight: bold;
  overflow: hidden;
}
.nav-title span {
  display: block;
  margin-left: -3px;
}
.nav-tools {
  display: flex;
  align-items: center;
  gap: 4px;
  height: 27px;
  padding-right: 2px;
  background: #f0f0f0;
  border-bottom: 1px solid #c4c6ca;
}
.spark {
  margin-right: auto;
}
.tool-btn {
  display: flex;
  align-items: center;
  justify-content: center;
  width: 24px;
  height: 22px;
  background: #e8f3fe;
  border: 1px solid #8bc0f2;
  border-radius: 3px;
}
.tree {
  list-style: none;
  margin: 0;
  padding: 2px 0 0;
}
.node, .leaf {
  display: flex;
  align-items: center;
  height: 24px;
  white-space: nowrap;
}
.folder {
  width: 14px;
  height: 12px;
  margin: 0 6px 0 -7px;
}
.leaf {
  padding-left: 34px;
}
.leaf-ico {
  width: 13px;
  height: 14px;
  margin-right: 8px;
}

/* component list */
.mid-panel {
  display: flex;
  flex-direction: column;
  width: 280px;
  background: #f0f0f0;
}
.ptabs {
  display: flex;
  height: 23px;
  padding-left: 1px;
  border-bottom: 1px solid #c4c6ca;
}
.ptab {
  width: 65px;
  height: 22px;
  line-height: 22px;
  text-align: center;
  background: #ddd;
  color: #888;
  font-weight: bold;
  border-right: 1px solid #c4c6ca;
}
.ptab-on {
  background: #f0f0f0;
  color: #333;
}
.mid-tools {
  display: flex;
  align-items: center;
  height: 27px;
  padding-left: 7px;
}
.tool-ico {
  width: 14px;
  height: 14px;
  margin-right: 5px;
}
.caret {
  margin: 0 9px 0 5px;
  border-top: 3px solid #444;
  border-left: 3px solid transparent;
  border-right: 3px solid transparent;
}
.ti-gap {
  margin-left: 8px;
}
.more {
  margin-left: auto;
  padding-right: 3px;
}
.search {
  display: flex;
  align-items: center;
  height: 20px;
  line-height: 19px;
  padding-left: 2px;
  background: #fff;
  color: #888;
  border-bottom: 1px solid #c4c6ca;
}
.search-text {
  width: 260px;
}
.comp-tree {
  height: 337px;
  padding-top: 2px;
  background: #fff;
  border: solid #aaa;
  border-width: 0 0 1px 1px;
}
.comp-row {
  display: flex;
  align-items: center;
  height: 24px;
  padding-left: 10px;
}
.tri {
  width: 0;
  height: 0;
  margin-right: 7px;
  border-bottom: 6px solid #444;
  border-left: 6px solid transparent;
}
.comp-child {
  padding-left: 40px;
}
.sel {
  padding: 0 3px;
  line-height: 21px;
  background: #b0ccee;
}
.strip-lower {
  flex-shrink: 0;
  margin-top: 5px;
  height: 12px;
}
.ptabs-lower {
  flex-shrink: 0;
}
.props {
  width: 280px;
  table-layout: fixed;
  border-collapse: collapse;
  background: #fff;
}
.props th, .props td {
  height: 20px;
  padding: 0;
  border: 1px solid #ccc;
  font-weight: normal;
  line-height: 17px;
}
.props th {
  background: #f0f0f0;
  text-align: center;
}
.props td {
  padding-left: 3px;
}
.c-no { width: 22px; }
.c-name { width: 101px; }
.c-val { width: 113px; }
.props .c-add {
  text-align: left;
  padding-left: 8px;
}
.props .link {
  color: #2a6fe0;
}
.props .c-check {
  padding-left: 13px;
}
.check {
  display: block;
  width: 14px;
  height: 14px;
  background: #fff;
  border: 1px solid #777;
  border-radius: 3px;
}

/* black drawing area */
.canvas {
  flex: 1;
  background: #000;
  margin-top: 1px;
}

/* dialog */
.dialog {
  position: absolute;
  left: 470px;
  top: 67px;
  width: 701px;
  height: 436px;
  background: #f0f0f0;
  border-left: 1px solid #d8dce6;
  overflow: hidden;
}
.dlg-head {
  height: 27px;
  line-height: 27px;
  padding-left: 8px;
  background: #2e7de1;
  color: #dfeaf8;
}
.dlg-row {
  display: flex;
  align-items: center;
  height: 44px;
  padding: 2px 0 0 12px;
  white-space: nowrap;
}
.dlg-label {
  width: 470px;
  flex-shrink: 0;
}
.unit {
  width: 42px;
  flex-shrink: 0;
}
.unit-mm {
  width: 30px;
  flex-shrink: 0;
  font-family: "Liberation Sans", sans-serif;
  font-size: 13px;
}
.radio {
  width: 12px;
  height: 12px;
  flex-shrink: 0;
  margin-right: 5px;
  background: #fff;
  border: 1px solid #777;
  border-radius: 50%;
}
.radio-on {
  background: radial-gradient(#3d8ce8 0 3px, #fff 3.500px);
  border-color: #7ab0ea;
}
.radio-text {
  flex-shrink: 0;
  margin-right: 8px;
}
.dlg-body {
  display: flex;
  padding-left: 12px;
}
.shape-grid {
  display: grid;
  grid-template-columns: repeat(3, 152px);
  grid-auto-rows: 152px;
  gap: 1px;
  flex-shrink: 0;
  width: 459px;
  height: 365px;
  padding: 1px 0 0 1px;
  background: #d4d4d4;
  overflow: hidden;
}
.cell {
  padding: 5px 7px 7px 5px;
  background: #fff;
}
.cell-on {
  box-shadow: inset 0 0 0 3px #2e7de1;
}
.shape {
  width: 140px;
  height: 140px;
  background: #6f93a9;
}
.shape text {
  font-family: "Liberation Mono", "Noto Sans CJK SC", monospace;
}
.yl {
  fill: none;
  stroke: #ff0;
}
.wc {
  fill: none;
  stroke: #fff;
}
.dim {
  fill: none;
  stroke: #000;
}
.hw {
  fill: url(#hatch-w);
  stroke: #fff;
}
.hy {
  fill: url(#hatch-y);
  stroke: #b5b84c;
}
.ol {
  fill: none;
  stroke: #b5b84c;
}
.dim2 {
  fill: none;
  stroke: #3a4a55;
}
.dim3 {
  fill: none;
  stroke: #3a4a55;
  stroke-width: 1.500;
}
.shape .t-s {
  font-size: 7px;
  font-weight: bold;
  fill: #fff;
  text-anchor: middle;
}
.shape .t-m {
  font-size: 12px;
  fill: #fff;
}
.shape .t-name {
  font-family: "Noto Sans CJK SC", sans-serif;
  fill: #3a3a80;
  text-anchor: middle;
}
.shape .t-12 { font-size: 10px; }
.shape .t-16 { font-size: 16px; }
.shape .t-20 { font-size: 20px; }
.shape .t-w {
  font-family: "Liberation Serif", serif;
  font-size: 16px;
  fill: #fff;
  text-anchor: middle;
}
.shape .t-f {
  font-size: 13.300px;
  fill: #fff;
  text-anchor: middle;
}
.gutter {
  width: 11px;
  flex-shrink: 0;
  height: 366px;
  background: #fff;
  padding: 14px 0 0 3px;
}
.thumb {
  height: 215px;
  background: #c8c8c8;
  border-radius: 3px;
}
.preview {
  width: 218px;
  height: 366px;
  flex-shrink: 0;
  background: #000;
}
.drawing {
  width: 218px;
  height: 366px;
}
.drawing text {
  font-family: "Noto Sans CJK SC", sans-serif;
}
.p-w {
  font-size: 26px;
  fill: #eee;
}
.drawing .p-g, .drawing .p-gs {
  font-family: "Liberation Mono", monospace;
  font-size: 25px;
  font-weight: bold;
  fill: #12c812;
}
.drawing .p-one {
  font-family: "Liberation Serif", serif;
  font-size: 60px;
  fill: #fff;
  text-anchor: middle;
}
.p-title {
  font-size: 66px;
  font-weight: 300;
  fill: #fff;
}
```
